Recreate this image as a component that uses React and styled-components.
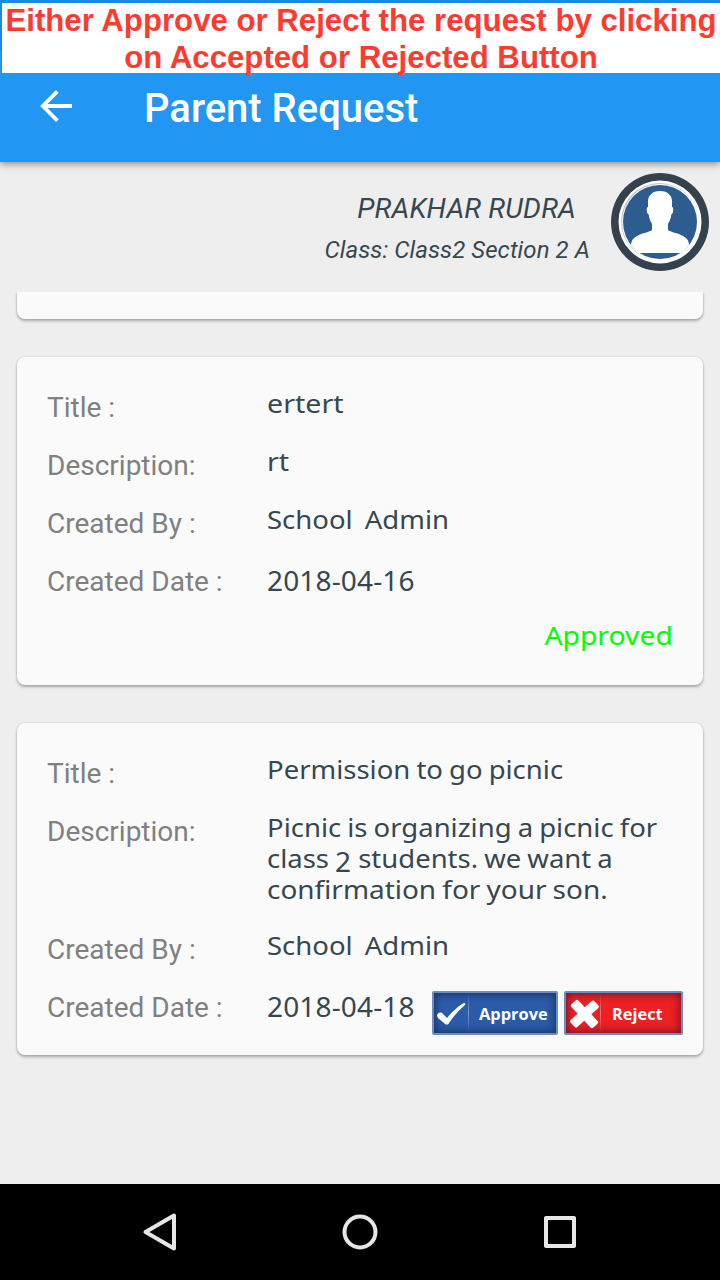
import React from "react";
import styled, { createGlobalStyle } from "styled-components";

const GlobalStyle = createGlobalStyle`
  * { box-sizing: border-box; }
  body { margin: 0; background: #eeeeee; }
`;

const Screen = styled.div`
  display: flex;
  flex-direction: column;
  width: 720px;
  height: 1280px;
  overflow: hidden;
  background: #eeeeee;
  font-family: Roboto, sans-serif;
`;

const Top = styled.header`
  flex: none;
  height: 162px;
  padding: 3px 0 0 2px;
  background: linear-gradient(#1e88e5 50px, #2196f3 50px);
  box-shadow: 0 2px 7px rgba(0, 0, 0, 0.42);
`;

const Notice = styled.div`
  height: 70px;
  background: #fff;
  color: #ff3b30;
  font: bold 31.2px/37px "Liberation Sans", sans-serif;
  text-align: center;
  white-space: nowrap;
`;

const NoticeLine = styled.div`
  height: 37px;
  &:first-child {
    height: 36px;
    line-height: 35px;
  }
`;

const AppBar = styled.div`
  display: flex;
  align-items: center;
  height: 70px;
  padding-left: 36px;
`;

const BackIcon = styled.svg`
  width: 36px;
  height: 36px;
  margin: -4px 70px 0 0;
`;

const PageTitle = styled.h1`
  margin: 2px 0 0;
  color: #fff;
  font-size: 40px;
  font-weight: 500;
  line-height: 48px;
`;

const Profile = styled.section`
  flex: none;
  display: flex;
  justify-content: flex-end;
  height: 130px;
  padding: 11px 11px 0 0;
  color: #37474f;
  font-style: italic;
`;

const ProfileText = styled.div`
  display: flex;
  flex-direction: column;
  align-items: flex-end;
  padding-top: 19px;
  margin-right: 21px;
`;

const StudentName = styled.div`
  margin-right: 14px;
  font-size: 28px;
  line-height: 33px;
  letter-spacing: 0.2px;
`;

const ClassName = styled.div`
  margin-top: 11px;
  font-size: 24px;
  line-height: 28px;
  letter-spacing: 0.08px;
`;

const Avatar = styled.svg`
  width: 98px;
  height: 98px;
`;

const List = styled.main`
  flex: 1;
  min-height: 0;
  overflow: hidden;
  padding: 0 17px;
`;

const Card = styled.article`
  display: flex;
  flex-direction: column;
  gap: 25px;
  height: ${(p) => p.$height}px;
  margin-bottom: 38px;
  padding: ${(p) => (p.$clipped ? "0" : "34px 20px 0 30px")};
  background: #fafafa;
  border-radius: ${(p) => (p.$clipped ? "0 0 8px 8px" : "8px")};
  box-shadow: 0 2px 3px rgba(0, 0, 0, 0.28), 0 0 2px rgba(0, 0, 0, 0.16);
`;

const Row = styled.div`
  display: flex;
  align-items: flex-start;
  min-height: 33px;
`;

const Label = styled.div`
  flex: none;
  width: 220px;
  color: #808080;
  font-size: 28px;
  line-height: 33px;
`;

const Value = styled.div`
  color: #37474f;
  font: 26px/31px "Noto Sans", sans-serif;
  word-spacing: -1px;
  white-space: pre;
`;

const Line = styled.div`
  transform: translateY(-3px) scaleX(${(p) => p.$stretch ?? 1.057});
  transform-origin: left top;
`;

const Digit = styled.span`
  display: inline-block;
  height: 31px;
  font-size: 28px;
  vertical-align: top;
  transform: translateY(3px) scaleX(0.95);
`;

const DateValue = styled.div`
  width: 165px;
  color: #37474f;
  font: 28px/33px "Noto Sans", sans-serif;
  letter-spacing: 0.15px;
  transform: translateY(-1px);
`;

const Status = styled.div`
  align-self: flex-end;
  margin-right: 10px;
  color: #00ff00;
  font: 26px/31px "Noto Sans", sans-serif;
  transform: translateY(-3px) scaleX(1.09);
  transform-origin: right top;
`;

const Action = styled.button`
  display: flex;
  align-items: center;
  flex: none;
  width: ${(p) => p.$width}px;
  height: 44px;
  margin: 0 6px 0 0;
  padding: 0;
  border: 2px solid #6b8fc4;
  border-radius: 2px;
  background: ${(p) => p.$color};
  box-shadow: inset 0 0 9px 1px rgba(20, 20, 45, 0.62);
  color: #fff;
  font: 700 16.4px/24px "Open Sans", sans-serif;
  &:last-child { margin-right: 0; }
`;

const ActionIcon = styled.svg`
  flex: none;
  width: 34px;
  height: 40px;
`;

const Divider = styled.span`
  width: 1px;
  height: 38px;
  background: linear-gradient(transparent, rgba(255, 255, 255, 0.4), transparent);
`;

const ActionText = styled.span`
  margin-left: ${(p) => p.$left}px;
  padding-top: 2px;
`;

const NavBar = styled.nav`
  flex: none;
  display: flex;
  justify-content: center;
  align-items: center;
  gap: 160px;
  height: 96px;
  background: #000;
`;

const NavIcon = styled.svg`
  width: 40px;
  height: 40px;
  fill: none;
  stroke: #e6e6e6;
  stroke-width: 4;
  stroke-linejoin: round;
`;

function Field({ label, children }) {
  return (
    <Row>
      <Label>{label}</Label>
      {children}
    </Row>
  );
}

export default function App() {
  return (
    <>
      <GlobalStyle />
      <Screen>
        <Top>
          <Notice>
            <NoticeLine>Either Approve or Reject the request by clicking</NoticeLine>
            <NoticeLine>on Accepted or Rejected Button</NoticeLine>
          </Notice>
          <AppBar>
            <BackIcon viewBox="0 0 36 36" fill="none" stroke="#fff" strokeWidth="3.8">
              <path d="M34 18H5M19.4 3.4 4.8 18l14.6 14.6" />
            </BackIcon>
            <PageTitle>Parent Request</PageTitle>
          </AppBar>
        </Top>

        <Profile>
          <ProfileText>
            <StudentName>PRAKHAR RUDRA</StudentName>
            <ClassName>Class: Class2 Section 2 A</ClassName>
          </ProfileText>
          <Avatar viewBox="0 0 98 98">
            <circle cx="49" cy="49" r="49" fill="#36414e" />
            <circle cx="49" cy="49" r="41.5" fill="#fff" />
            <circle cx="48.6" cy="48.6" r="38.6" fill="#c4c6c6" />
            <circle cx="49.3" cy="49.3" r="38.2" fill="#fff" />
            <circle cx="49" cy="49" r="37" fill="#2d5c90" />
            <path
              fill="#fff"
              d="M49 18c8 0 12 5 12 10v6c2 0 1.5 7-.7 7.5C60 46 58 49 57 51v6c2 2 10 3 15 6 4 2 6 5 6 9l-7 8H27l-7-8c0-4 2-7 6-9 5-3 13-4 15-6v-6c-1-2-3-5-3.3-9.5C35.5 41 35 34 37 34v-6c0-5 4-10 12-10z"
            />
          </Avatar>
        </Profile>

        <List>
          <Card $height={27} $clipped />

          <Card $height={328}>
            <Field label="Title :"><Value><Line $stretch={1.1}>ertert</Line></Value></Field>
            <Field label="Description:"><Value><Line $stretch={1.1}>rt</Line></Value></Field>
            <Field label="Created By :"><Value><Line>{"School  Admin"}</Line></Value></Field>
            <Field label="Created Date :"><DateValue>2018-04-16</DateValue></Field>
            <Status>Approved</Status>
          </Card>

          <Card $height={332}>
            <Field label="Title :"><Value><Line>Permission to go picnic</Line></Value></Field>
            <Field label="Description:">
              <Value>
                <Line>Picnic is organizing a picnic for</Line>
                <Line>
                  {"class "}
                  <Digit>2</Digit>
                  {" students. we want a"}
                </Line>
                <Line $stretch={1.074}>confirmation for your son.</Line>
              </Value>
            </Field>
            <Field label="Created By :"><Value><Line>{"School  Admin"}</Line></Value></Field>
            <Field label="Created Date :">
              <DateValue>2018-04-18</DateValue>
              <Action $width={126} $color="#2a5caa">
                <ActionIcon viewBox="0 0 34 40" fill="#fff">
                  <path d="M3 23c0-3 4-5 6-2l4 4C18 19 24 13 30 10q2 0 1 2C24 18 19 24 15 30c-1 2-3 2-5 0L4 25z" />
                </ActionIcon>
                <Divider />
                <ActionText $left={10}>Approve</ActionText>
              </Action>
              <Action $width={119} $color="#ed2024">
                <ActionIcon viewBox="0 0 34 40" fill="#fff">
                  <rect x="2.5" y="16.2" width="32" height="9.6" rx="2" transform="rotate(47 18.5 21)" />
                  <rect x="2.5" y="16.2" width="32" height="9.6" rx="2" transform="rotate(-42 18.5 21)" />
                </ActionIcon>
                <Divider />
                <ActionText $left={11}>Reject</ActionText>
              </Action>
            </Field>
          </Card>
        </List>

        <NavBar>
          <NavIcon viewBox="0 0 40 40"><path d="M34 3.5v33L5.5 20z" /></NavIcon>
          <NavIcon viewBox="0 0 40 40"><circle cx="20" cy="20" r="15.5" /></NavIcon>
          <NavIcon viewBox="0 0 40 40"><path d="M6 6h28v28H6z" /></NavIcon>
        </NavBar>
      </Screen>
    </>
  );
}
